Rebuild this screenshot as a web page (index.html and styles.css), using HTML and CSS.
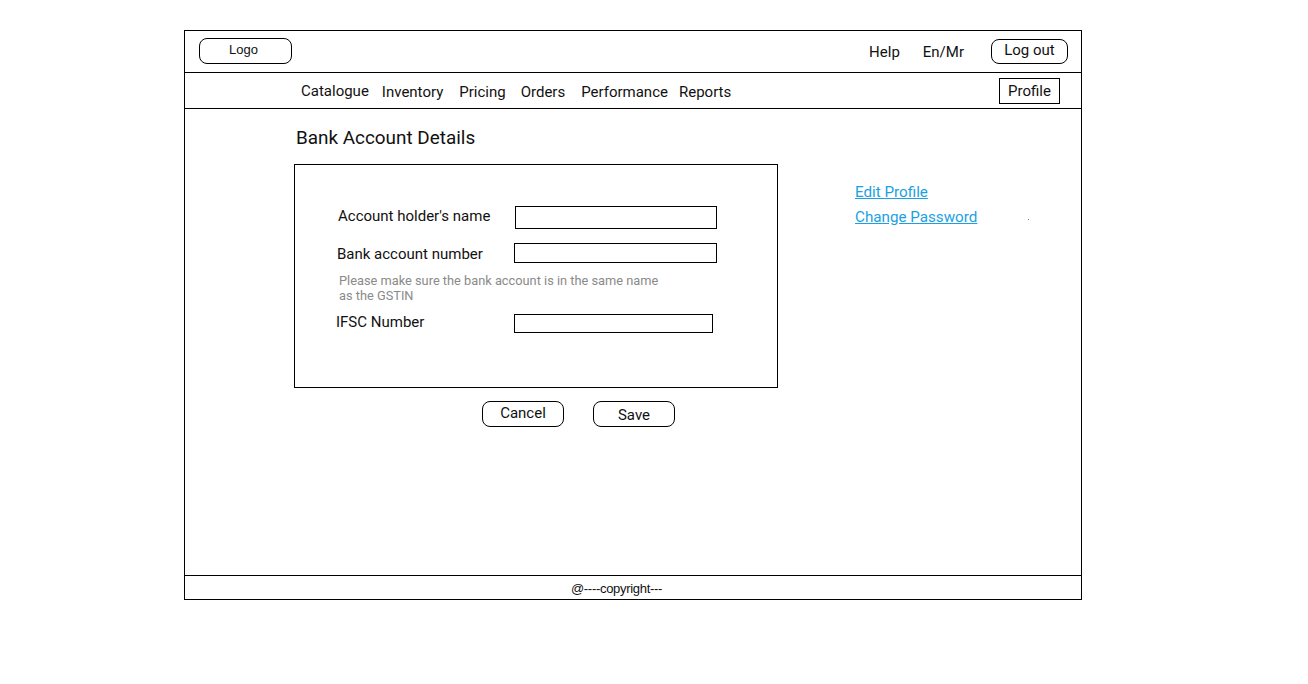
FILE: index.html
```html
<!DOCTYPE html>
<html>
<head>
<meta charset="utf-8">
<link rel="stylesheet" href="styles.css">
</head>
<body>
<div class="frame">
  <header class="topbar">
    <div class="pill logo">Logo</div>
    <div class="top-right">
      <span class="top-link">Help</span>
      <span class="top-link lang">En/Mr</span>
      <div class="pill logout">Log out</div>
    </div>
  </header>
  <nav class="navbar">
    <div class="nav-items">
      <span class="nav-item">Catalogue</span>
      <span class="nav-item">Inventory</span>
      <span class="nav-item">Pricing</span>
      <span class="nav-item">Orders</span>
      <span class="nav-item">Performance</span>
      <span class="nav-item">Reports</span>
    </div>
    <div class="profile-box">Profile</div>
  </nav>
  <main class="main">
    <section class="form-col">
      <h1 class="title">Bank Account Details</h1>
      <div class="form-box">
        <div class="row row1">
          <span class="label">Account holder's name</span>
          <span class="input in1"></span>
        </div>
        <div class="row row2">
          <span class="label l2">Bank account number</span>
          <span class="input in2"></span>
        </div>
        <p class="hint">Please make sure the bank account is in the same name<br>as the GSTIN</p>
        <div class="row row3">
          <span class="label l3">IFSC Number</span>
          <span class="input in3"></span>
        </div>
      </div>
      <div class="buttons">
        <div class="pill btn">Cancel</div>
        <div class="pill btn save">Save</div>
      </div>
    </section>
    <aside class="links">
      <a class="link">Edit Profile</a>
      <a class="link">Change Password</a>
      <span class="dot"></span>
    </aside>
  </main>
  <footer class="footer">@----copyright---</footer>
</div>
</body>
</html>
```
FILE: styles.css
```css
* { box-sizing: border-box; }
body {
  margin: 0;
  background: #fff;
  font-family: Roboto, "Liberation Sans", sans-serif;
  color: #111;
}
.frame {
  margin: 30px 0 0 184px;
  width: 898px;
  border-left: 1px solid #000;
  border-right: 1px solid #000;
}
.topbar {
  height: 43px;
  border-top: 1px solid #000;
  border-bottom: 1px solid #000;
  display: flex;
  align-items: flex-start;
  justify-content: space-between;
  padding: 7px 13px 0 14px;
}
.pill {
  border: 1px solid #000;
  border-radius: 8px;
  display: flex;
  align-items: center;
  justify-content: center;
}
.logo {
  width: 93px;
  height: 26px;
  font-family: "Liberation Sans", Arial, sans-serif;
  font-size: 13px;
  padding-bottom: 3px;
  padding-right: 4px;
}
.top-right {
  display: flex;
  align-items: center;
  padding-top: 1px;
}
.top-link {
  font-size: 15px;
  margin-right: 23px;
}
.lang { margin-right: 27px; }
.logout {
  width: 77px;
  height: 25px;
  font-size: 15px;
  padding-bottom: 3px;
}
.navbar {
  height: 36px;
  border-bottom: 1px solid #000;
  display: flex;
  align-items: flex-start;
  justify-content: space-between;
  padding: 5px 21px 0 116px;
}
.nav-items {
  display: flex;
  gap: 13px;
  padding-top: 5px;
  font-size: 15px;
}
.nav-item:first-child { margin-top: -1px; }
.nav-item:nth-child(2) { margin-right: 3px; }
.nav-item:nth-child(3) { margin-right: 2px; }
.nav-item:nth-child(4) { margin-right: 3px; }
.nav-item:nth-child(5) { margin-right: -2px; }
.profile-box {
  border: 1px solid #000;
  width: 61px;
  height: 26px;
  font-size: 15px;
  display: flex;
  align-items: center;
  justify-content: center;
}
.main {
  height: 466px;
  display: flex;
  padding: 18px 0 0 109px;
}
.form-col { width: 484px; }
.title {
  margin: 0 0 15px 2px;
  font-size: 18.9px;
  font-weight: 400;
  line-height: 22px;
}
.form-box {
  border: 1px solid #000;
  height: 224px;
  padding-top: 41px;
}
.row {
  display: flex;
  align-items: center;
}
.label {
  font-size: 15px;
  width: 220px;
  padding-left: 43px;
  padding-bottom: 4px;
}
.l2 { padding-left: 42px; width: 219px; padding-bottom: 0; padding-top: 2px; }
.l3 { padding-left: 41px; width: 219px; padding-bottom: 2px; }
.input {
  display: block;
  border: 1px solid #000;
}
.in1 { width: 202px; height: 23px; }
.row2 { margin-top: 14px; }
.in2 { width: 203px; height: 20px; }
.hint {
  margin: 10px 0 0 44px;
  font-size: 12.8px;
  line-height: 15px;
  color: #8a8a8a;
}
.row3 { margin-top: 10px; }
.in3 { width: 199px; height: 19px; }
.buttons {
  display: flex;
  gap: 29px;
  margin: 13px 0 0 188px;
}
.btn {
  width: 82px;
  height: 26px;
  font-size: 15px;
  padding-bottom: 2px;
}
.save { padding-bottom: 0; padding-top: 2px; }
.links {
  margin-left: 77px;
  padding-top: 53px;
  display: flex;
  flex-direction: column;
  position: relative;
}
.link {
  color: #1ba1e2;
  text-decoration: underline;
  font-size: 15.2px;
  line-height: 25px;
}
.dot {
  position: absolute;
  left: 173px;
  top: 92px;
  width: 1px;
  height: 1px;
  background: #1ba1e2;
}
.footer {
  border-top: 1px solid #000;
  border-bottom: 1px solid #000;
  height: 25px;
  margin-left: -1px;
  display: flex;
  align-items: center;
  justify-content: center;
  font-family: "Liberation Sans", Arial, sans-serif;
  font-size: 13px;
  letter-spacing: -0.3px;
  padding-right: 32px;
  padding-top: 2px;
}
```
